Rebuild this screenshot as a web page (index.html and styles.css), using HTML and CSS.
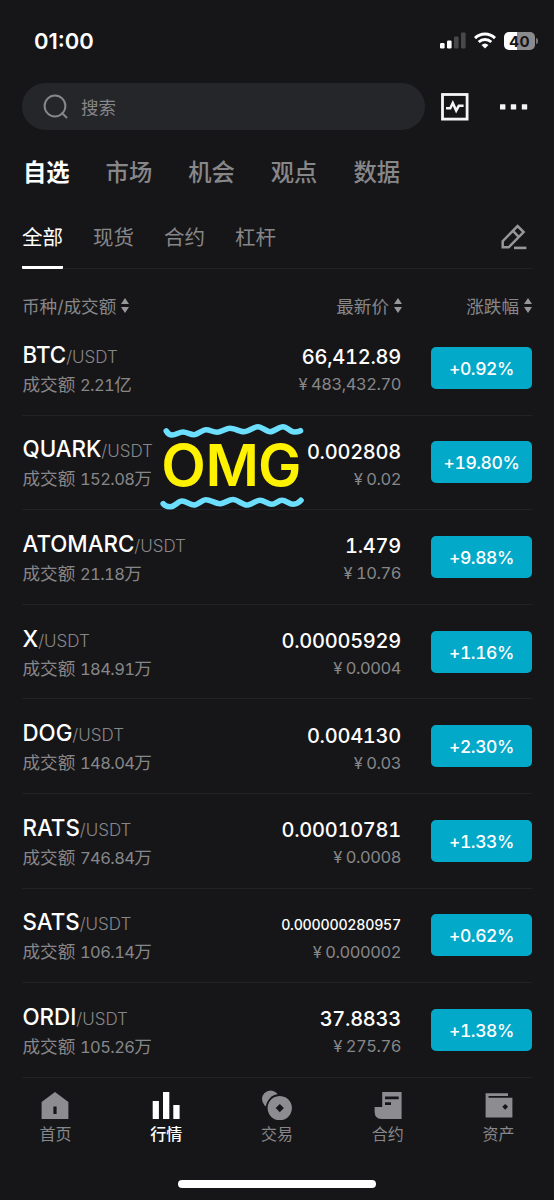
FILE: index.html
```
<!DOCTYPE html>
<html lang="zh-CN">
<head>
    <meta charset="UTF-8">
    <meta name="viewport" content="width=device-width, initial-scale=1.0">
    <title>行情</title>
    <link rel="stylesheet" href="styles.css">
</head>
<body>
    <!-- Status bar -->
    <header class="status-bar">
        <span class="clock">01:00</span>
        <div class="status-icons">
            <svg class="signal" width="26" height="17" viewBox="0 0 26 17">
                <rect x="0" y="11" width="4.6" height="5.5" rx="1.3" fill="#fff"/>
                <rect x="7" y="8.5" width="4.6" height="8" rx="1.3" fill="#fff"/>
                <rect x="14" y="4.5" width="4.6" height="12" rx="1.3" fill="#48484b"/>
                <rect x="21" y="0.5" width="4.6" height="16" rx="1.3" fill="#48484b"/>
            </svg>
            <svg class="wifi" width="22" height="17" viewBox="0 0 22 17">
                <g fill="none" stroke="#fff" stroke-width="2.9">
                    <path d="M1 6.1C6.6.6 15.4.6 21 6.1"/>
                    <path d="M4.7 10C8.3 6.6 13.7 6.6 17.3 10"/>
                </g>
                <path d="M11 16.6L7.5 13.1Q11 10 14.5 13.1Z" fill="#fff"/>
            </svg>
            <div class="battery">40</div>
        </div>
    </header>

    <!-- Search -->
    <div class="search-row">
        <div class="search-box">
            <svg width="26" height="26" viewBox="0 0 26 26" fill="none" stroke="#87878b" stroke-width="2">
                <circle cx="12" cy="12" r="10.4"/>
                <path d="M18.5 18.5L24 24"/>
            </svg>
            <span>搜索</span>
        </div>
        <svg class="pulse" width="28" height="28" viewBox="0 0 28 28" fill="none" stroke="#f5f5f8">
            <rect x="1.5" y="1.5" width="24.6" height="24.6" stroke-width="2.8"/>
            <path d="M5 15.2H9.3L11.8 10L15.2 17.6L17.8 12.8H22.6" stroke-width="2.5"/>
        </svg>
        <svg class="more" width="28" height="6" viewBox="0 0 28 6" fill="#f5f5f8">
            <rect x="0" y="0.2" width="5.4" height="5.4" rx="0.6"/>
            <rect x="10.8" y="0.2" width="5.4" height="5.4" rx="0.6"/>
            <rect x="21.8" y="0.2" width="5.4" height="5.4" rx="0.6"/>
        </svg>
    </div>

    <!-- Tabs -->
    <nav class="tabs">
        <a class="active">自选</a>
        <a>市场</a>
        <a>机会</a>
        <a>观点</a>
        <a>数据</a>
    </nav>

    <div class="sub-tabs">
        <a class="active">全部</a>
        <a>现货</a>
        <a>合约</a>
        <a>杠杆</a>
        <svg class="edit" width="26" height="26" viewBox="0 0 26 26" fill="none" stroke="#97979a" stroke-width="2.5">
            <path d="M1.7 23.3V17.2L16.6 2L22.6 8L7.7 23.3Z"/>
            <path d="M12 6.9L17.7 12.8"/>
            <path d="M13 23.9H25.4" stroke-width="2.6"/>
        </svg>
    </div>

    <!-- Market list -->
    <div class="list-head">
        <span class="col-name">币种/成交额<i class="sort"></i></span>
        <span class="col-price">最新价<i class="sort"></i></span>
        <span class="col-change">涨跌幅<i class="sort"></i></span>
    </div>

    <main class="market-list">
        <div class="row">
            <div class="pair"><p><b>BTC</b>/USDT</p><small>成交额 <span>2.21</span>亿</small></div>
            <div class="price"><p>66,412.89</p><small>¥ 483,432.70</small></div>
            <div class="change">+0.92%</div>
        </div>
        <div class="row">
            <div class="pair"><p><b>QUARK</b>/USDT</p><small>成交额 <span>152.08</span>万</small></div>
            <div class="price"><p>0.002808</p><small>¥ 0.02</small></div>
            <div class="change">+19.80%</div>
            <!-- Sticker -->
            <svg class="sticker" width="146" height="88" viewBox="0 0 146 88">
                <g fill="none" stroke="#6cdfff" stroke-width="5.6" stroke-linecap="round">
                    <path d="M6.3 8C8 11 9.5 12 12 12C16 12 19 9 23 9S30 11.7 34 11.7S42 6.7 46 6.7S53 9.3 57 9.3S66 5.3 70 5.3S80 8.7 84 8.7S94 3.7 98 3.7S106 8.7 110 8.7S119 3.7 123 3.7S130 9 134 9Q138 9 140.5 7.7"/>
                    <path d="M3.2 80.7C5 83 7 83.7 10.3 83.7C15 83.7 18 78 22 78S30 82 34 82S42 76.7 46 76.7S55.7 80.7 59.7 80.7S69 76.5 73 76.5S82.7 82 86.7 82S96 77.3 100 77.3S107.7 81.3 111.7 81.3S118 77.3 122 77.3S129 81.3 133 81.3Q138 81 141 77.3"/>
                </g>
                <text x="1.2 45.4 98" y="63.2">OMG</text>
            </svg>
        </div>
        <div class="row">
            <div class="pair"><p><b>ATOMARC</b>/USDT</p><small>成交额 <span>21.18</span>万</small></div>
            <div class="price"><p>1.479</p><small>¥ 10.76</small></div>
            <div class="change">+9.88%</div>
        </div>
        <div class="row">
            <div class="pair"><p><b>X</b>/USDT</p><small>成交额 <span>184.91</span>万</small></div>
            <div class="price"><p>0.00005929</p><small>¥ 0.0004</small></div>
            <div class="change">+1.16%</div>
        </div>
        <div class="row">
            <div class="pair"><p><b>DOG</b>/USDT</p><small>成交额 <span>148.04</span>万</small></div>
            <div class="price"><p>0.004130</p><small>¥ 0.03</small></div>
            <div class="change">+2.30%</div>
        </div>
        <div class="row">
            <div class="pair"><p><b>RATS</b>/USDT</p><small>成交额 <span>746.84</span>万</small></div>
            <div class="price"><p>0.00010781</p><small>¥ 0.0008</small></div>
            <div class="change">+1.33%</div>
        </div>
        <div class="row">
            <div class="pair"><p><b>SATS</b>/USDT</p><small>成交额 <span>106.14</span>万</small></div>
            <div class="price"><p class="long">0.000000280957</p><small>¥ 0.000002</small></div>
            <div class="change">+0.62%</div>
        </div>
        <div class="row">
            <div class="pair"><p><b>ORDI</b>/USDT</p><small>成交额 <span>105.26</span>万</small></div>
            <div class="price"><p>37.8833</p><small>¥ 275.76</small></div>
            <div class="change">+1.38%</div>
        </div>
    </main>

    <!-- Bottom navigation -->
    <footer class="bottom-nav">
        <a>
            <svg width="28" height="30" viewBox="0 0 28 30"><path fill-rule="evenodd" d="M14 2L27.4 12V29H.6V12ZM12.4 16.6V24H15.6V16.6Z"/></svg>
            首页
        </a>
        <a class="active">
            <svg width="28" height="30" viewBox="0 0 28 30"><path d="M.7 11H6.9V29H.7ZM11 2H17.3V29H11ZM21.3 15H27.6V29H21.3Z"/></svg>
            行情
        </a>
        <a>
            <svg width="32" height="30" viewBox="0 0 32 30">
                <circle cx="9.6" cy="9.1" r="8.6"/>
                <circle cx="18.8" cy="18.1" r="14" fill="#161618"/>
                <path fill-rule="evenodd" d="M18.8 5.9A12.2 12.2 0 1 1 18.7 5.9ZM18.8 14L14.7 18.1L18.8 22.2L22.9 18.1Z"/>
            </svg>
            交易
        </a>
        <a>
            <svg width="28" height="30" viewBox="0 0 28 30"><path fill-rule="evenodd" d="M8.2 2H27.6V29H7.5Q.6 29 .6 21.5V17H8.2ZM11 6.6V9.3H24.7V6.6ZM11 12.3V15H17V12.3Z"/></svg>
            合约
        </a>
        <a>
            <svg width="28" height="30" viewBox="0 0 28 30"><path fill-rule="evenodd" d="M.6 3.3H23V6.1H3.5V7.8H27.4V27.5H.6ZM20.2 13.9L17.3 16.8L20.2 19.7L23.1 16.8Z"/></svg>
            资产
        </a>
    </footer>
    <div class="home-indicator"></div>
</body>
</html>
```
FILE: styles.css
```
/* General Reset */
* {
    box-sizing: border-box;
}

body {
    margin: 0;
    height: 1200px;
    display: flex;
    flex-direction: column;
    overflow: hidden;
    background-color: #161618;
    color: #87878a;
    font-family: Inter, 'Noto Sans CJK SC', sans-serif;
}

p {
    margin: 0;
}

svg {
    display: block;
    flex: none;
}

/* Status Bar */
.status-bar {
    height: 83px;
    padding: 0 15px 2px 34px;
    display: flex;
    justify-content: space-between;
    align-items: center;
}

.clock {
    color: #fff;
    font-size: 22px;
    font-weight: 600;
}

.status-icons {
    display: flex;
    align-items: center;
    gap: 8px;
}

.battery {
    position: relative;
    width: 31px;
    height: 18px;
    margin-right: 4px;
    border-radius: 5px;
    background: linear-gradient(90deg, #fff 42%, #8b8b8d 42%);
    color: #161618;
    font-size: 15px;
    font-weight: 700;
    line-height: 19px;
    text-align: center;
    letter-spacing: 0.3px;
}

.battery::after {
    content: "";
    position: absolute;
    right: -3px;
    top: 6px;
    width: 2px;
    height: 6px;
    border-radius: 0 2px 2px 0;
    background: #747477;
}

/* Search */
.search-row {
    height: 47px;
    padding: 0 26px 0 22px;
    display: flex;
    align-items: center;
}

.search-box {
    width: 403px;
    height: 47px;
    padding-left: 21px;
    display: flex;
    align-items: center;
    gap: 12px;
    border-radius: 24px;
    background-color: #25262a;
    font-size: 17.5px;
}

.pulse {
    margin-left: 16px;
}

.more {
    margin-left: auto;
}

/* Tabs */
.tabs {
    height: 84px;
    padding: 0 0 3px 23px;
    display: flex;
    align-items: center;
    gap: 36px;
    font-size: 23.3px;
    font-weight: 500;
}

.tabs .active {
    color: #fff;
    font-weight: 700;
}

.sub-tabs {
    height: 55px;
    margin: 0 22px;
    display: flex;
    gap: 30px;
    border-bottom: 1px solid #222225;
    font-size: 20.5px;
    line-height: 47px;
}

.sub-tabs .active {
    height: 55px;
    color: #fff;
    border-bottom: 3px solid #fff;
    border-radius: 1px;
}

.edit {
    margin: 10px 5px 0 auto;
}

/* List Header */
.list-head {
    height: 52px;
    padding: 0 22px;
    display: flex;
    align-items: center;
    font-size: 17.6px;
}

.list-head span {
    display: flex;
    align-items: center;
    justify-content: flex-end;
    gap: 5px;
    padding-top: 21px;
}

.list-head .col-name {
    flex: 1;
    justify-content: flex-start;
}

.col-change {
    width: 130px;
}

.sort::before,
.sort::after {
    content: "";
    display: block;
    border: 4px solid transparent;
}

.sort::before {
    border-top: 0;
    border-bottom: 6px solid #97979a;
    margin-bottom: 3px;
}

.sort::after {
    border-bottom: 0;
    border-top: 6px solid #97979a;
}

/* Market List */
.market-list {
    margin: 0 22px;
    font-variant-numeric: tabular-nums;
}

.row {
    position: relative;
    height: 94.6px;
    display: flex;
    align-items: center;
    border-bottom: 1px solid #222225;
}

.pair {
    flex: 1;
    padding: 4px 0 0 0.5px;
}

.pair p {
    font-size: 17px;
    font-weight: 350;
    line-height: 28px;
}

.pair b {
    color: #fff;
    font-size: 22.3px;
    font-weight: 500;
}

.row small {
    display: block;
    font-size: 17.6px;
    line-height: 28px;
}

.pair span {
    font-size: 16.5px;
    letter-spacing: -0.6px;
}

.price {
    width: 130px;
    padding-top: 5px;
    text-align: right;
    white-space: nowrap;
}

.price p {
    color: #fff;
    font-size: 20px;
    font-weight: 500;
    line-height: 28px;
    letter-spacing: -0.25px;
}

.price .long {
    font-size: 14.2px;
}

.row .price small {
    font-size: 16.5px;
    line-height: 26px;
    letter-spacing: -0.45px;
}

.change {
    width: 101px;
    height: 42px;
    margin-left: 30px;
    border-radius: 5px;
    background-color: #03a9c9;
    color: #fff;
    font-size: 17.5px;
    font-weight: 500;
    line-height: 43px;
    text-align: center;
    letter-spacing: -0.4px;
}

.sticker {
    position: absolute;
    left: 138px;
    top: 7px;
    fill: #fff200;
    font-size: 58px;
    font-weight: 600;
}

/* Bottom Navigation */
.bottom-nav {
    height: 102px;
    padding-top: 12px;
    display: flex;
}

.bottom-nav a {
    flex: 1;
    display: flex;
    flex-direction: column;
    align-items: center;
    font-size: 16px;
    line-height: 28px;
    fill: #8c8c91;
}

.bottom-nav .active {
    color: #fff;
    font-weight: 500;
    fill: #fff;
}

.home-indicator {
    width: 198px;
    height: 8px;
    margin: 0 auto;
    border-radius: 4px;
    background-color: #fff;
}
```
